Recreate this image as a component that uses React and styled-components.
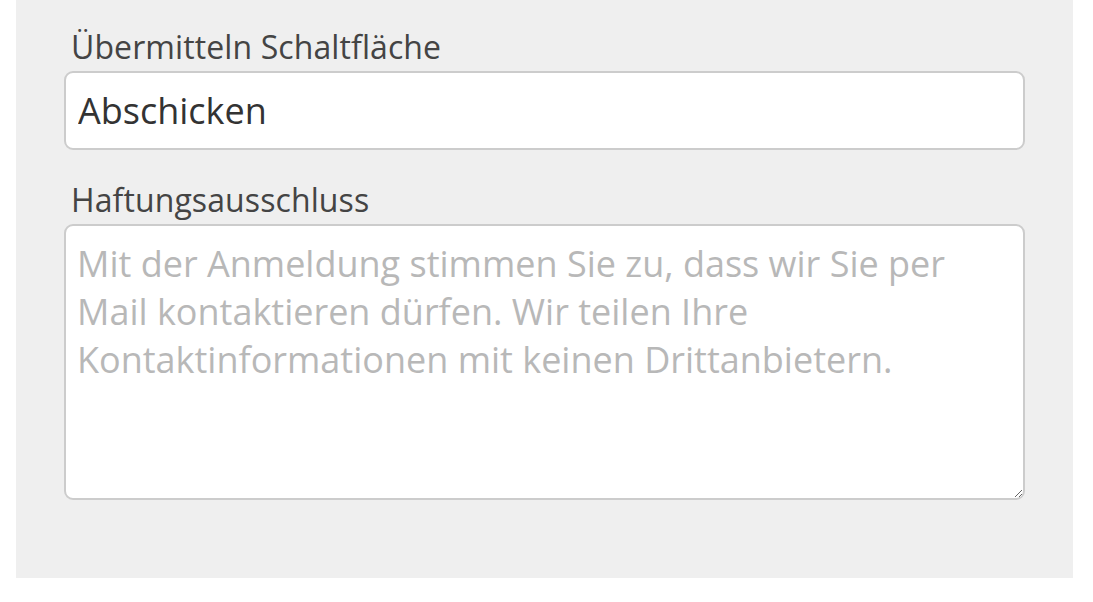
import React from "react";
import styled, { createGlobalStyle } from "styled-components";

const GlobalStyle = createGlobalStyle`
  body {
    margin: 0;
    background: #ffffff;
    font-family: "Open Sans", "Liberation Sans", sans-serif;
  }
`;

const Panel = styled.div`
  box-sizing: border-box;
  width: 1057px;
  height: 578px;
  margin-left: 16px;
  padding: 27px 48px 0;
  background: #efefef;
`;

const Field = styled.div`
  display: flex;
  flex-direction: column;
  margin-bottom: ${(p) => p.gap || 0}px;
`;

const Label = styled.label`
  display: block;
  padding-left: 7px;
  margin-bottom: 4px;
  font-size: 32px;
  line-height: 40px;
  letter-spacing: 0.1px;
  color: #444444;
`;

const TextInput = styled.input`
  box-sizing: border-box;
  width: 100%;
  height: 79px;
  padding: 0 12px;
  margin: 0;
  border: 2px solid #cccccc;
  border-radius: 9px;
  background: #ffffff;
  font-family: inherit;
  font-size: 36px;
  color: #333333;
  outline: none;
`;

const TextArea = styled.textarea`
  box-sizing: border-box;
  display: block;
  width: 100%;
  height: 276px;
  margin: 0;
  padding: 14px 11px;
  border: 2px solid #cccccc;
  border-radius: 9px;
  background: #ffffff;
  font-family: inherit;
  font-size: 36px;
  line-height: 48px;
  color: #333333;
  outline: none;
  resize: vertical;

  &::placeholder {
    color: #b8b8b8;
  }
`;

const App = () => {
  return (
    <>
      <GlobalStyle />
      <Panel>
        <Field gap={30}>
          <Label>Übermitteln Schaltfläche</Label>
          <TextInput defaultValue="Abschicken" />
        </Field>
        <Field>
          <Label>Haftungsausschluss</Label>
          <TextArea placeholder="Mit der Anmeldung stimmen Sie zu, dass wir Sie per Mail kontaktieren dürfen. Wir teilen Ihre Kontaktinformationen mit keinen Drittanbietern." />
        </Field>
      </Panel>
    </>
  );
};

export default App;
